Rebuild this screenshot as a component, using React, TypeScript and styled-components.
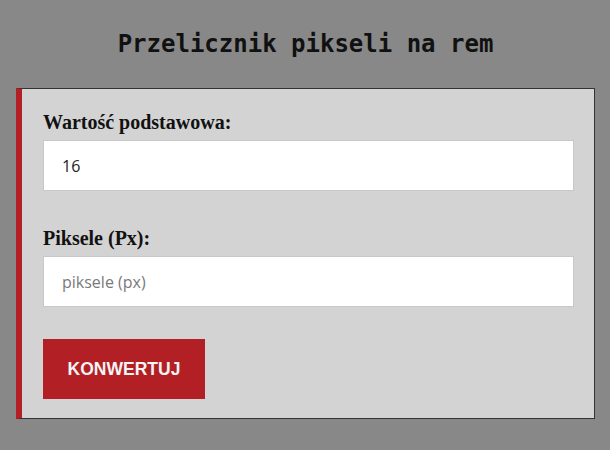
import React from "react";
import styled, { createGlobalStyle } from "styled-components";

const Global = createGlobalStyle`
  html, body { margin: 0; padding: 0; background: #888888; }
  * { box-sizing: border-box; }
`;

const Page = styled.div`
  padding: 29px 15px 0 16px;
`;

const Title = styled.h1`
  margin: 0 0 29px 0;
  text-align: center;
  font-family: "DejaVu Sans Mono", "Liberation Mono", monospace;
  font-weight: bold;
  font-size: 24px;
  line-height: 30px;
  color: #111;
`;

const Card = styled.form`
  background: #d3d3d3;
  border: 1px solid #333;
  border-left: 6px solid #b22025;
  padding: 22px 20px 19px 21px;
  display: flex;
  flex-direction: column;
`;

const Field = styled.div<{ $gap: number }>`
  display: flex;
  flex-direction: column;
  margin-bottom: ${(p) => p.$gap}px;
`;

const Label = styled.label`
  font-family: "Liberation Serif", "DejaVu Serif", serif;
  font-weight: bold;
  font-size: 20px;
  line-height: 23px;
  color: #111;
  margin-bottom: 6px;
`;

const Input = styled.input`
  height: 51px;
  width: 100%;
  border: 1px solid #c8c8c8;
  background: #fff;
  padding: 0 18px;
  font-family: "Open Sans", "Liberation Sans", sans-serif;
  font-size: 16px;
  color: #222;
  outline: none;
  &::placeholder { color: #7a7a7a; }
`;

const Button = styled.button`
  align-self: flex-start;
  width: 162px;
  height: 60px;
  border: none;
  background: #b22025;
  color: #f4f4f4;
  font-family: "Liberation Sans", Arial, sans-serif;
  font-weight: bold;
  font-size: 17.5px;
  text-transform: uppercase;
  cursor: pointer;
`;

export default function App() {
  return (
    <>
      <Global />
      <Page>
        <Title>Przelicznik pikseli na rem</Title>
        <Card onSubmit={(e) => e.preventDefault()}>
          <Field $gap={36}>
            <Label htmlFor="base">Wartość podstawowa:</Label>
            <Input id="base" type="text" defaultValue="16" />
          </Field>
          <Field $gap={32}>
            <Label htmlFor="px">Piksele (Px):</Label>
            <Input id="px" type="text" placeholder="piksele (px)" />
          </Field>
          <Button type="submit">Konwertuj</Button>
        </Card>
      </Page>
    </>
  );
}
